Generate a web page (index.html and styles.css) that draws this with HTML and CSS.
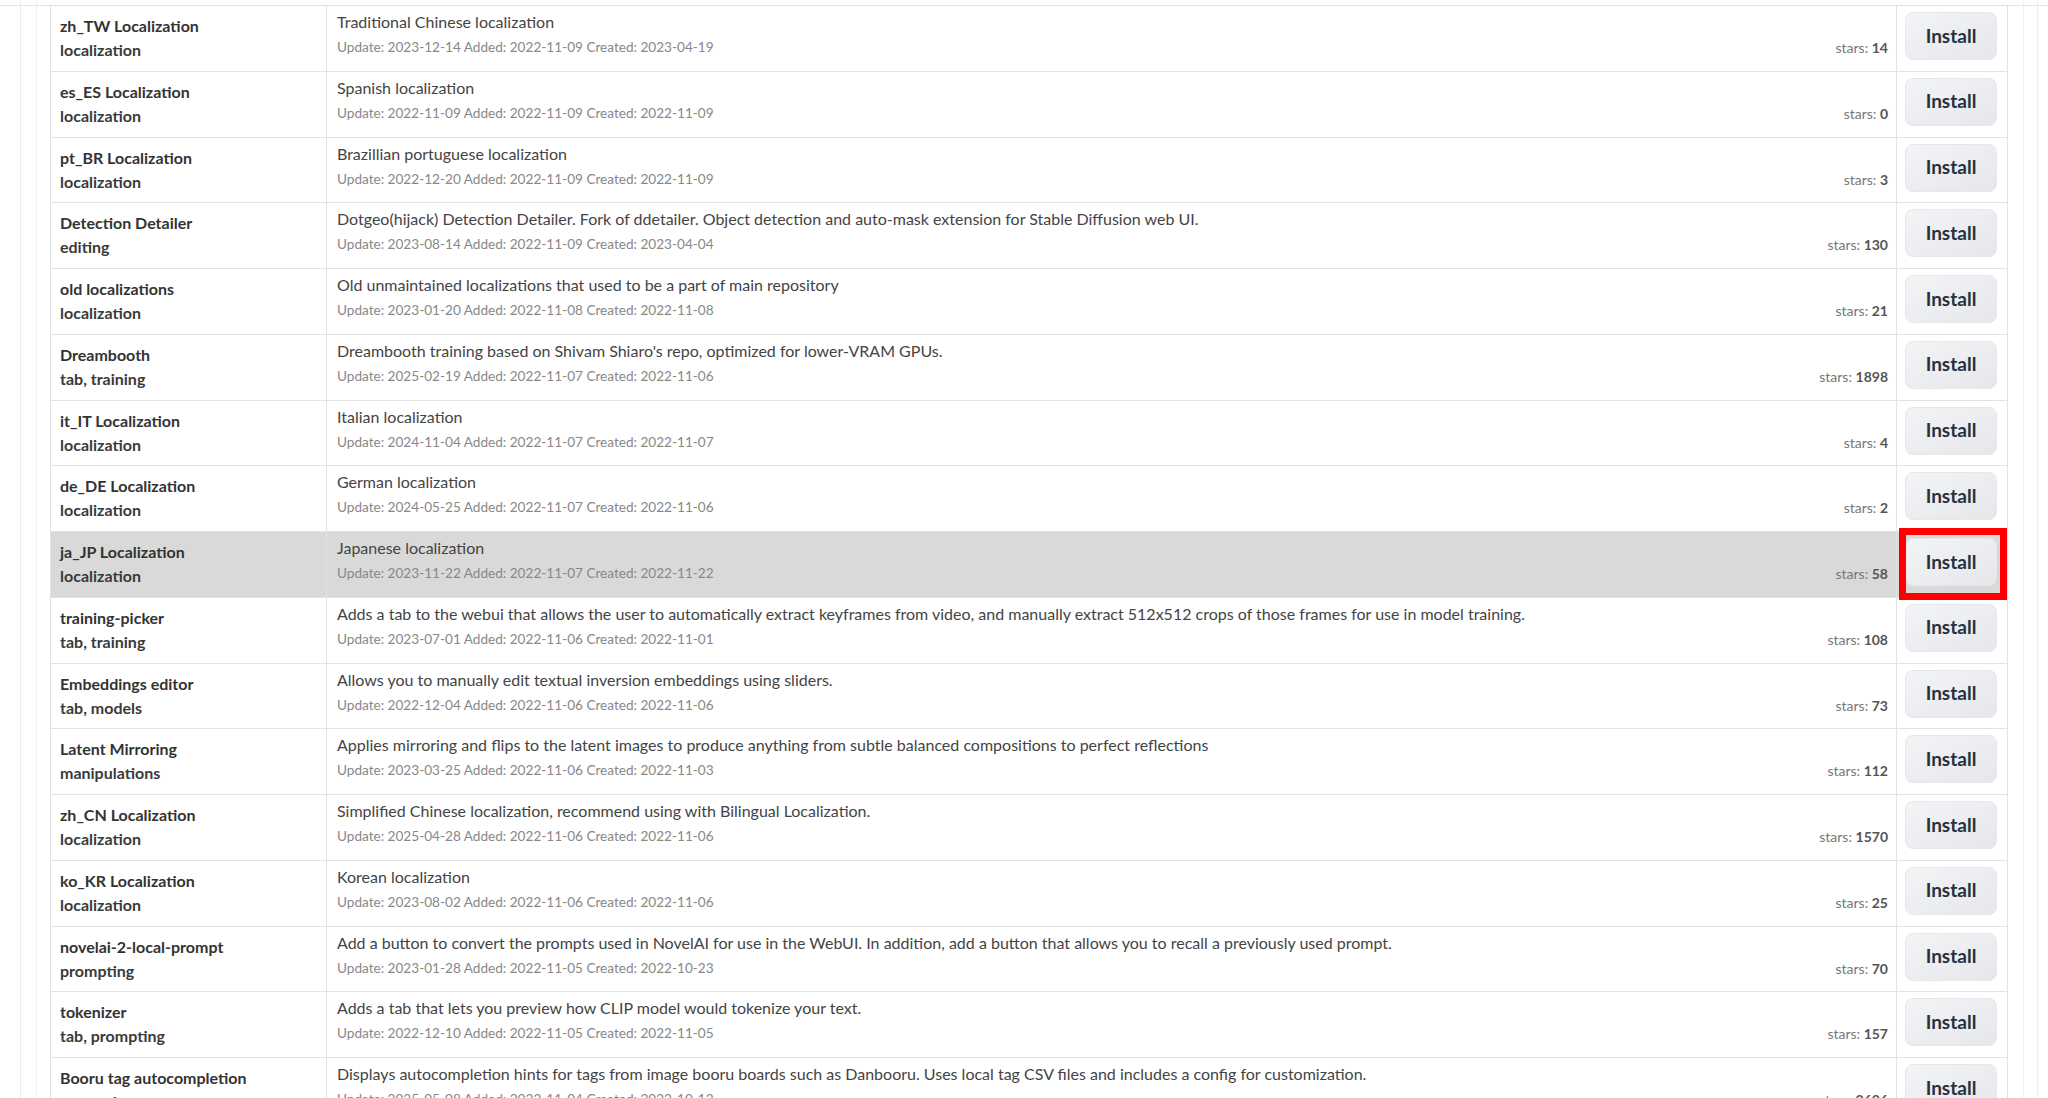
FILE: index.html
```html
<!DOCTYPE html>
<html lang="en">
<head>
<meta charset="UTF-8">
<title>Extensions - Available</title>
<link rel="stylesheet" href="styles.css">
</head>
<body>

<div class="outer">
  <div class="inner">
    <table class="ext-table">
      <colgroup>
        <col class="col-name">
        <col class="col-desc">
        <col class="col-action">
      </colgroup>
      <tbody>
        <tr>
          <td class="name">zh_TW Localization<br><span class="tags">localization</span></td>
          <td class="desc">Traditional Chinese localization
            <p class="info"><span class="dates">Update: 2023-12-14 Added: 2022-11-09 Created: 2023-04-19</span><span class="stars">stars: <b>14</b></span></p></td>
          <td class="action"><button class="install">Install</button></td>
        </tr>
        <tr>
          <td class="name">es_ES Localization<br><span class="tags">localization</span></td>
          <td class="desc">Spanish localization
            <p class="info"><span class="dates">Update: 2022-11-09 Added: 2022-11-09 Created: 2022-11-09</span><span class="stars">stars: <b>0</b></span></p></td>
          <td class="action"><button class="install">Install</button></td>
        </tr>
        <tr>
          <td class="name">pt_BR Localization<br><span class="tags">localization</span></td>
          <td class="desc">Brazillian portuguese localization
            <p class="info"><span class="dates">Update: 2022-12-20 Added: 2022-11-09 Created: 2022-11-09</span><span class="stars">stars: <b>3</b></span></p></td>
          <td class="action"><button class="install">Install</button></td>
        </tr>
        <tr>
          <td class="name">Detection Detailer<br><span class="tags">editing</span></td>
          <td class="desc">Dotgeo(hijack) Detection Detailer. Fork of ddetailer. Object detection and auto-mask extension for Stable Diffusion web UI.
            <p class="info"><span class="dates">Update: 2023-08-14 Added: 2022-11-09 Created: 2023-04-04</span><span class="stars">stars: <b>130</b></span></p></td>
          <td class="action"><button class="install">Install</button></td>
        </tr>
        <tr>
          <td class="name">old localizations<br><span class="tags">localization</span></td>
          <td class="desc">Old unmaintained localizations that used to be a part of main repository
            <p class="info"><span class="dates">Update: 2023-01-20 Added: 2022-11-08 Created: 2022-11-08</span><span class="stars">stars: <b>21</b></span></p></td>
          <td class="action"><button class="install">Install</button></td>
        </tr>
        <tr>
          <td class="name">Dreambooth<br><span class="tags">tab, training</span></td>
          <td class="desc">Dreambooth training based on Shivam Shiaro's repo, optimized for lower-VRAM GPUs.
            <p class="info"><span class="dates">Update: 2025-02-19 Added: 2022-11-07 Created: 2022-11-06</span><span class="stars">stars: <b>1898</b></span></p></td>
          <td class="action"><button class="install">Install</button></td>
        </tr>
        <tr>
          <td class="name">it_IT Localization<br><span class="tags">localization</span></td>
          <td class="desc">Italian localization
            <p class="info"><span class="dates">Update: 2024-11-04 Added: 2022-11-07 Created: 2022-11-07</span><span class="stars">stars: <b>4</b></span></p></td>
          <td class="action"><button class="install">Install</button></td>
        </tr>
        <tr>
          <td class="name">de_DE Localization<br><span class="tags">localization</span></td>
          <td class="desc">German localization
            <p class="info"><span class="dates">Update: 2024-05-25 Added: 2022-11-07 Created: 2022-11-06</span><span class="stars">stars: <b>2</b></span></p></td>
          <td class="action"><button class="install">Install</button></td>
        </tr>
        <tr class="hover">
          <td class="name">ja_JP Localization<br><span class="tags">localization</span></td>
          <td class="desc">Japanese localization
            <p class="info"><span class="dates">Update: 2023-11-22 Added: 2022-11-07 Created: 2022-11-22</span><span class="stars">stars: <b>58</b></span></p></td>
          <td class="action marked"><button class="install">Install</button></td>
        </tr>
        <tr>
          <td class="name">training-picker<br><span class="tags">tab, training</span></td>
          <td class="desc">Adds a tab to the webui that allows the user to automatically extract keyframes from video, and manually extract 512x512 crops of those frames for use in model training.
            <p class="info"><span class="dates">Update: 2023-07-01 Added: 2022-11-06 Created: 2022-11-01</span><span class="stars">stars: <b>108</b></span></p></td>
          <td class="action"><button class="install">Install</button></td>
        </tr>
        <tr>
          <td class="name">Embeddings editor<br><span class="tags">tab, models</span></td>
          <td class="desc">Allows you to manually edit textual inversion embeddings using sliders.
            <p class="info"><span class="dates">Update: 2022-12-04 Added: 2022-11-06 Created: 2022-11-06</span><span class="stars">stars: <b>73</b></span></p></td>
          <td class="action"><button class="install">Install</button></td>
        </tr>
        <tr>
          <td class="name">Latent Mirroring<br><span class="tags">manipulations</span></td>
          <td class="desc">Applies mirroring and flips to the latent images to produce anything from subtle balanced compositions to perfect reflections
            <p class="info"><span class="dates">Update: 2023-03-25 Added: 2022-11-06 Created: 2022-11-03</span><span class="stars">stars: <b>112</b></span></p></td>
          <td class="action"><button class="install">Install</button></td>
        </tr>
        <tr>
          <td class="name">zh_CN Localization<br><span class="tags">localization</span></td>
          <td class="desc">Simplified Chinese localization, recommend using with Bilingual Localization.
            <p class="info"><span class="dates">Update: 2025-04-28 Added: 2022-11-06 Created: 2022-11-06</span><span class="stars">stars: <b>1570</b></span></p></td>
          <td class="action"><button class="install">Install</button></td>
        </tr>
        <tr>
          <td class="name">ko_KR Localization<br><span class="tags">localization</span></td>
          <td class="desc">Korean localization
            <p class="info"><span class="dates">Update: 2023-08-02 Added: 2022-11-06 Created: 2022-11-06</span><span class="stars">stars: <b>25</b></span></p></td>
          <td class="action"><button class="install">Install</button></td>
        </tr>
        <tr>
          <td class="name">novelai-2-local-prompt<br><span class="tags">prompting</span></td>
          <td class="desc">Add a button to convert the prompts used in NovelAI for use in the WebUI. In addition, add a button that allows you to recall a previously used prompt.
            <p class="info"><span class="dates">Update: 2023-01-28 Added: 2022-11-05 Created: 2022-10-23</span><span class="stars">stars: <b>70</b></span></p></td>
          <td class="action"><button class="install">Install</button></td>
        </tr>
        <tr>
          <td class="name">tokenizer<br><span class="tags">tab, prompting</span></td>
          <td class="desc">Adds a tab that lets you preview how CLIP model would tokenize your text.
            <p class="info"><span class="dates">Update: 2022-12-10 Added: 2022-11-05 Created: 2022-11-05</span><span class="stars">stars: <b>157</b></span></p></td>
          <td class="action"><button class="install">Install</button></td>
        </tr>
        <tr>
          <td class="name">Booru tag autocompletion<br><span class="tags">prompting</span></td>
          <td class="desc">Displays autocompletion hints for tags from image booru boards such as Danbooru. Uses local tag CSV files and includes a config for customization.
            <p class="info"><span class="dates">Update: 2025-05-08 Added: 2022-11-04 Created: 2022-10-12</span><span class="stars">stars: <b>2606</b></span></p></td>
          <td class="action"><button class="install">Install</button></td>
        </tr>
      </tbody>
    </table>
  </div>
</div>

</body>
</html>
```

FILE: styles.css
```css
html, body {
  height: 100%;
}

body {
  margin: 0;
  font-family: Lato, "Open Sans", sans-serif;
  color: #333;
  /* thin rule across the whole page, just above the table */
  background: linear-gradient(to bottom, #fff 5px, #e4e4e4 5px, #e4e4e4 6px, #fff 6px);
  overflow: hidden;
}

/* Nested panels */
.outer {
  margin: 0 10px 0 20px;
  min-height: 100%;
  border-left: 1px solid #ececec;
  border-right: 1px solid #ececec;
}

.inner {
  margin: 0 13px 0 15px;
  min-height: 100vh;
  padding: 5px 15px 0 13px;
  border-left: 1px solid #f0f0f0;
  border-right: 1px solid #f0f0f0;
}

/* Extension table */
.ext-table {
  width: 100%;
  border-collapse: collapse;
  table-layout: fixed;
  background: #fff;
}

.col-name {
  width: 276px;
}

.col-action {
  width: 111px;
}

.ext-table tr {
  height: 65.75px;
}

.ext-table td {
  border: 1px solid #e2e2e2;
  vertical-align: top;
  padding: 0;
}

.ext-table tr.hover td {
  background-color: #d9d9d9;
}

.name {
  padding: 8px 8px 0 9px !important;
  font-size: 16px;
  font-weight: 700;
  line-height: 24px;
  color: #333;
}

.tags {
  color: #3a3a3a;
}

.desc {
  padding: 4px 8px 0 10px !important;
  font-size: 16px;
  line-height: 24px;
  color: #444;
}

.info {
  margin: 0;
  display: flex;
  justify-content: space-between;
  align-items: baseline;
  font-size: 13.6px;
  line-height: 25px;
  color: #888;
}

.stars {
  position: relative;
  top: 1px;
  font-size: 14px;
  color: #777;
}

.stars b {
  color: #555;
}

.action {
  padding: 6px 9px 0 8px !important;
  position: relative;
}

.install {
  display: block;
  width: 92px;
  height: 48px;
  padding: 0 0 2px;
  border: 1px solid #e6e7ea;
  border-radius: 8px;
  background: linear-gradient(to bottom right, #f3f4f6, #e6e7eb);
  font-family: Lato, "Open Sans", sans-serif;
  font-size: 19px;
  font-weight: 700;
  color: #27303d;
  cursor: pointer;
}

/* red annotation box */
.marked::after {
  content: "";
  position: absolute;
  top: -4px;
  bottom: -3px;
  left: 2px;
  right: 0;
  border: 7px solid #f00;
}
```
